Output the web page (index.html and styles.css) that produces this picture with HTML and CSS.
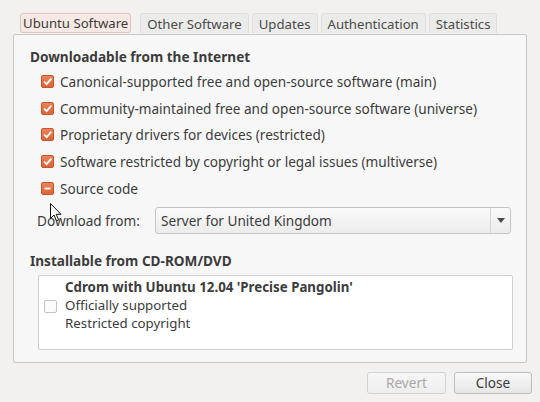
FILE: index.html
```html
<!DOCTYPE html>
<html>
<head>
<meta charset="utf-8">
<link rel="stylesheet" href="styles.css">
</head>
<body>
<div class="window">
  <div class="tabs">
    <div class="tab tab-active">Ubuntu Software</div>
    <div class="tab tab-gap">Other Software</div>
    <div class="tab">Updates</div>
    <div class="tab">Authentication</div>
    <div class="tab">Statistics</div>
  </div>
  <div class="panel">
    <div class="heading">Downloadable from the Internet</div>
    <div class="checks">
      <div class="check-row"><span class="cb cb-on"><svg viewBox="0 0 13 13" width="13" height="13"><path d="M3 6.5 L5.6 9.2 L10.4 3.6" fill="none" stroke="#fff" stroke-width="1.8"/></svg></span><span>Canonical-supported free and open-source software (main)</span></div>
      <div class="check-row"><span class="cb cb-on"><svg viewBox="0 0 13 13" width="13" height="13"><path d="M3 6.5 L5.6 9.2 L10.4 3.6" fill="none" stroke="#fff" stroke-width="1.8"/></svg></span><span>Community-maintained free and open-source software (universe)</span></div>
      <div class="check-row"><span class="cb cb-on"><svg viewBox="0 0 13 13" width="13" height="13"><path d="M3 6.5 L5.6 9.2 L10.4 3.6" fill="none" stroke="#fff" stroke-width="1.8"/></svg></span><span>Proprietary drivers for devices (restricted)</span></div>
      <div class="check-row"><span class="cb cb-on"><svg viewBox="0 0 13 13" width="13" height="13"><path d="M3 6.5 L5.6 9.2 L10.4 3.6" fill="none" stroke="#fff" stroke-width="1.8"/></svg></span><span>Software restricted by copyright or legal issues (multiverse)</span></div>
      <div class="check-row"><span class="cb cb-on"><svg viewBox="0 0 13 13" width="13" height="13"><path d="M3.5 6.5 H9.5" fill="none" stroke="#fff" stroke-width="1.8"/></svg></span><span>Source code</span></div>
    </div>
    <div class="download-row">
      <span class="download-label">Download from:</span>
      <div class="combo">
        <span class="combo-text">Server for United Kingdom</span>
        <span class="combo-arrow"><svg viewBox="0 0 8 5" width="8" height="5"><path d="M0 0 H8 L4 5 Z" fill="#4a4a4a"/></svg></span>
      </div>
    </div>
    <div class="heading heading-2">Installable from CD-ROM/DVD</div>
    <div class="listbox">
      <span class="cb cb-off"></span>
      <div class="cd-text">
        <div class="cd-title">Cdrom with Ubuntu 12.04 'Precise Pangolin'</div>
        <div>Officially supported</div>
        <div>Restricted copyright</div>
      </div>
    </div>
  </div>
  <div class="buttons">
    <div class="btn btn-disabled">Revert</div>
    <div class="btn">Close</div>
  </div>
  <svg class="cursor" viewBox="0 0 12 19" width="12" height="19"><path d="M0.5 0.5 V15.5 L4 12 L6.5 17.8 L8.6 16.9 L6.2 11.3 H11 Z" fill="#fff" stroke="#111" stroke-width="1"/></svg>
</div>
</body>
</html>
```
FILE: styles.css
```css
html, body {
  margin: 0;
  padding: 0;
}
body {
  background: #f2f1f0;
  font-family: "Noto Sans", "DejaVu Sans", sans-serif;
  font-size: 13.6px;
  color: #3c3c3c;
  width: 540px;
  height: 402px;
  overflow: hidden;
}
.window {
  position: relative;
  padding: 13px 13px 0 13px;
}
.tabs {
  display: flex;
  margin-left: 7px;
  gap: 3px;
  height: 21px;
  font-size: 13.2px;
}
.tab {
  height: 20px;
  line-height: 20px;
  padding: 0 6px;
  background: #ebebea;
  border: 1px solid #e0dfde;
  border-bottom: none;
  border-radius: 3px 3px 0 0;
  color: #4a4a4a;
  box-sizing: border-box;
}
.tab-active {
  background: #f6e9e5;
  border: 1px solid #dcc3bb;
  border-radius: 3px;
  color: #3c3c3c;
  height: 20px;
  line-height: 18px;
  padding: 0 2px;
}
.tab-gap {
  margin-left: 6px;
}
.panel {
  height: 329px;
  box-sizing: border-box;
  border: 1px solid #c9c8c7;
  border-radius: 2px;
  background: #f7f7f7;
  padding: 13px 15px 0 16px;
}
.heading {
  font-weight: bold;
  height: 18px;
  line-height: 18px;
}
.checks {
  margin-top: 2px;
  padding-left: 11px;
  display: flex;
  flex-direction: column;
}
.check-row {
  display: flex;
  align-items: center;
  gap: 6px;
  height: 26.7px;
}
.cb {
  width: 13px;
  height: 13px;
  box-sizing: border-box;
  border-radius: 2px;
  flex: none;
  display: block;
}
.cb svg {
  display: block;
  margin: -1px;
}
.cb-on {
  background: linear-gradient(#ec8259, #dd6436);
  border: 1px solid #c4552c;
}
.cb-off {
  background: #fbfbfb;
  border: 1px solid #c2c2c2;
}
.download-row {
  display: flex;
  align-items: center;
  margin-top: 6px;
  padding-left: 7px;
}
.download-label {
  width: 118px;
}
.combo {
  flex: none;
  width: 356px;
  height: 27px;
  box-sizing: border-box;
  border: 1px solid #c4c4c4;
  border-radius: 3px;
  background: linear-gradient(#fafafa, #ececec);
  display: flex;
  align-items: center;
}
.combo-text {
  flex: 1;
  padding-left: 5px;
}
.combo-arrow {
  width: 19px;
  height: 25px;
  border-left: 1px solid #d4d4d4;
  display: flex;
  align-items: center;
  justify-content: center;
}
.combo-arrow svg { display: block; }
.heading-2 {
  margin-top: 18px;
}
.listbox {
  margin-top: 5px;
  margin-left: 8px;
  width: 475px;
  height: 75px;
  box-sizing: border-box;
  border: 1px solid #cfcfcf;
  border-radius: 2px;
  background: #fff;
  display: flex;
  align-items: flex-start;
  padding: 2px 0 0 5px;
}
.listbox .cb {
  margin-top: 22px;
}
.cd-text {
  margin-left: 8px;
  font-size: 13.3px;
  line-height: 18px;
}
.cd-title {
  font-weight: bold;
}
.buttons {
  display: flex;
  justify-content: flex-end;
  gap: 8px;
  margin-top: 9px;
  margin-right: -5px;
}
.btn {
  width: 78px;
  height: 22px;
  box-sizing: border-box;
  border: 1px solid #bdbdbd;
  border-radius: 3px;
  background: linear-gradient(#f8f8f8, #e6e6e6);
  text-align: center;
  line-height: 20px;
  color: #3c3c3c;
}
.btn-disabled {
  color: #a8a8a8;
  border-color: #d2d2d2;
  background: linear-gradient(#f6f6f6, #eeeeee);
  width: 79px;
}
.cursor {
  position: absolute;
  left: 50px;
  top: 203px;
}
```
